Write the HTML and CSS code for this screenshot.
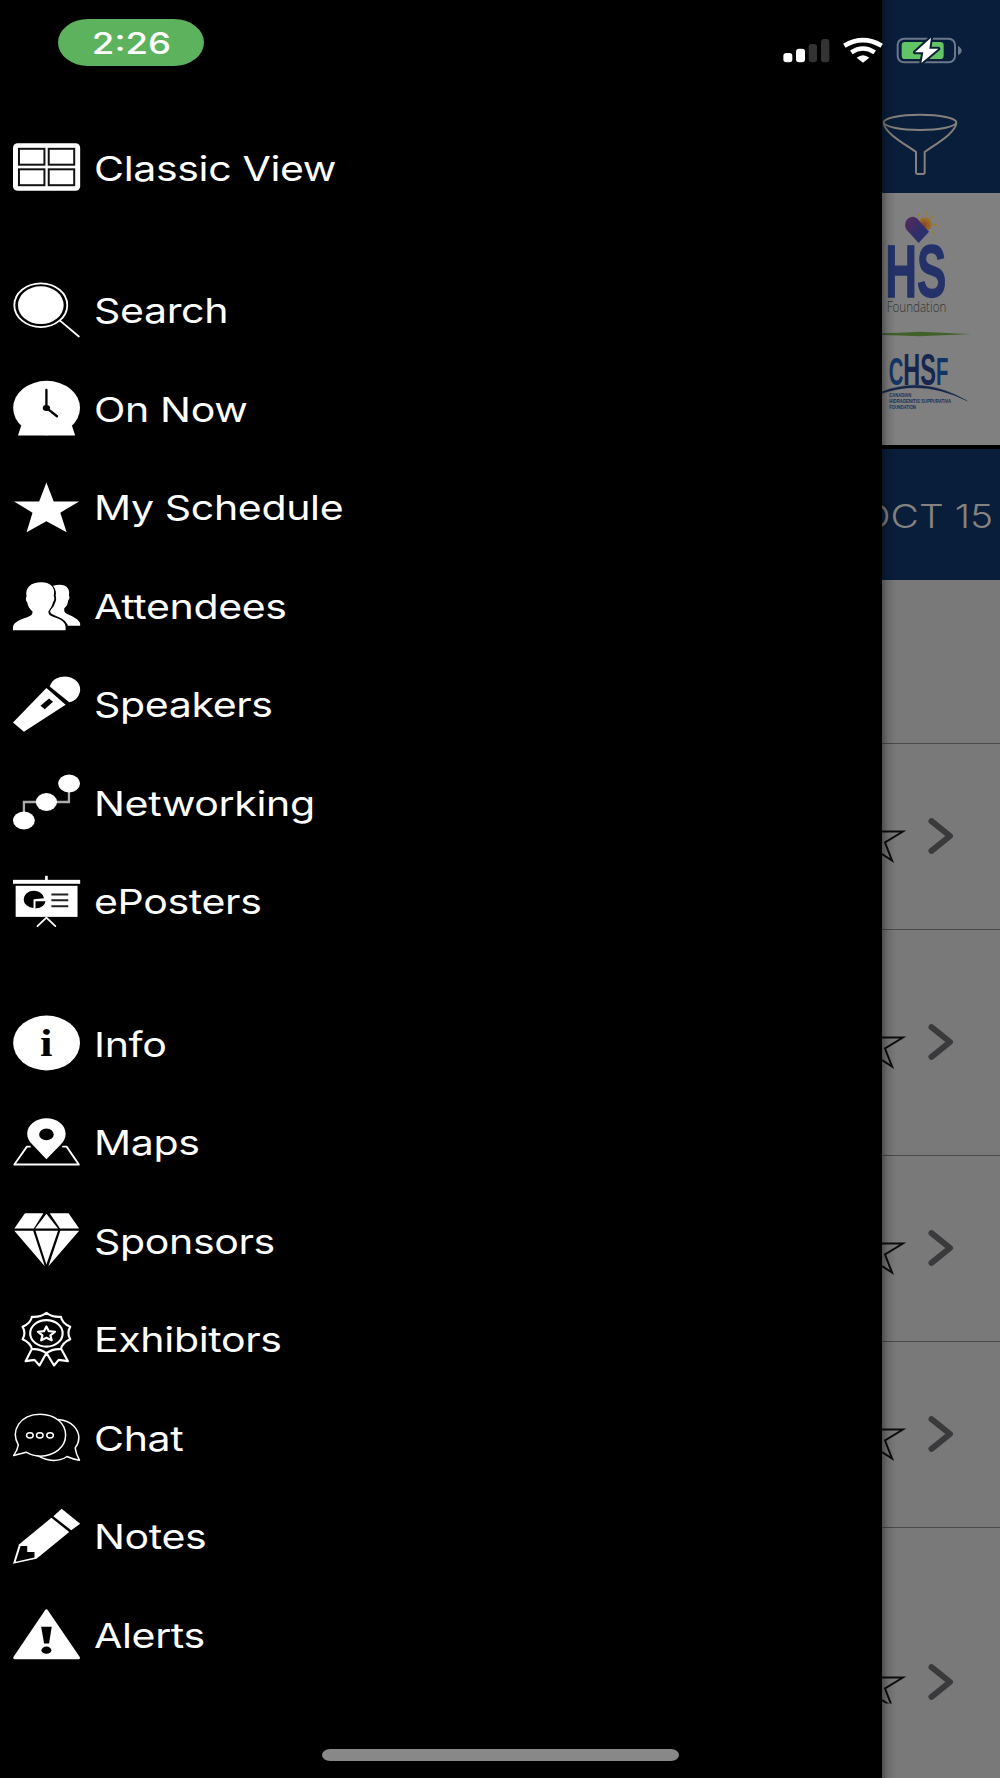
FILE: index.html
```html
<!DOCTYPE html>
<html lang="en">

<head>
    <meta charset="UTF-8">
    <meta name="viewport" content="width=device-width, initial-scale=1.0">
    <title>Menu</title>
    <link rel="stylesheet" href="styles.css">
</head>

<body>
    <nav class="drawer">
        <ul class="menu-group">
            <li class="menu-item">
                <svg class="menu-icon" viewBox="0 0 204 168">
                    <rect x="0" y="12" width="203" height="144" rx="14" />
                    <g stroke="#111" stroke-width="6">
                        <rect x="18" y="29" width="77" height="48" />
                        <rect x="108" y="29" width="77" height="48" />
                        <rect x="18" y="91" width="77" height="48" />
                        <rect x="108" y="91" width="77" height="48" />
                    </g>
                </svg>
                <span class="label">Classic View</span>
            </li>
        </ul>

        <ul class="menu-group">
            <li class="menu-item">
                <svg class="menu-icon" viewBox="0 0 204 168">
                    <ellipse class="line" cx="84" cy="69.5" rx="80" ry="66" />
                    <ellipse cx="84" cy="69.5" rx="69" ry="57" />
                    <path class="line" d="M143 117 L199 164" />
                </svg>
                <span class="label">Search</span>
            </li>
            <li class="menu-item">
                <svg class="menu-icon" viewBox="0 0 204 168">
                    <ellipse cx="101.500" cy="84" rx="101" ry="82" />
                    <path d="M25 137 L15 167 H188 L178 137Z" />
                    <path d="M101 29 V84 L133 109" fill="none" stroke="#000" stroke-width="7" stroke-linecap="round" />
                    <ellipse class="dark" cx="101" cy="84" rx="11" ry="9" />
                </svg>
                <span class="label">On Now</span>
            </li>
            <li class="menu-item">
                <svg class="menu-icon" viewBox="0 0 204 168">
                    <path d="M101 10 L123 67 H200 L143 101 L162 160 L101 127 L41 160 L59 101 L3 67 H79Z" />
                </svg>
                <span class="label">My Schedule</span>
            </li>
            <li class="menu-item">
                <svg class="menu-icon" viewBox="0 0 204 168">
                    <path d="M0 160 V150 C2 136 20 128 45 120 C57 116 59 112 59 104 C50 96 45 88 43 76 C38 70 38 62 41 58 C36 30 55 15 85 15 C115 15 129 32 123 56 C126 62 126 68 121 76 C118 88 112 96 107 104 C107 112 110 116 122 120 C150 128 158 138 159 150 V160Z" />
                    <path d="M166 147 H203 V140 C200 128 180 118 165 112 C153 107 155 100 155 94 C165 86 165 80 167 70 C172 64 171 58 169 55 C174 30 155 16 121 26 C130 38 131 48 129 56 C132 66 130 72 126 80 C122 92 112 98 112 104 C114 112 122 114 130 117 C150 124 162 134 166 147Z" />
                </svg>
                <span class="label">Attendees</span>
            </li>
            <li class="menu-item">
                <svg class="menu-icon" viewBox="0 0 204 168">
                    <path d="M111 31 C118 9 138 1 158 1 C185 3 204 20 203 42 C201 62 188 76 170 79Z" />
                    <path d="M101 36 L159 86 L33 168 L0 140Z" />
                    <path class="dark" d="M109 67 L121 77 L96 100 L83 89Z" />
                </svg>
                <span class="label">Speakers</span>
            </li>
            <li class="menu-item">
                <svg class="menu-icon" viewBox="0 0 204 168">
                    <path d="M33 140 V84 H169 V28" fill="none" stroke="#aaa" stroke-width="7" />
                    <ellipse cx="169.500" cy="28" rx="33" ry="27" />
                    <ellipse cx="101" cy="84" rx="32" ry="27" />
                    <ellipse cx="33" cy="140" rx="33" ry="27" />
                </svg>
                <span class="label">Networking</span>
            </li>
            <li class="menu-item">
                <svg class="menu-icon" viewBox="0 0 204 168">
                    <rect x="0" y="20" width="203" height="12" />
                    <rect x="97" y="8" width="8" height="14" />
                    <rect x="8" y="38" width="187" height="94" />
                    <path class="line" d="M74 160 L101 134 L128 160" />
                    <path class="dark" d="M94 76 A31 26 0 1 0 62 105 V79Z M68 85 H98 Q96 104 68 107Z" />
                    <path d="M116 64 H167 M116 82 H167 M116 100 H167" stroke="#222" stroke-width="6" />
                </svg>
                <span class="label">ePosters</span>
            </li>
        </ul>

        <ul class="menu-group">
            <li class="menu-item">
                <svg class="menu-icon" viewBox="0 0 204 168">
                    <ellipse cx="101.500" cy="84" rx="101" ry="83" />
                    <text class="info-i" x="82" y="123" textLength="38" lengthAdjust="spacingAndGlyphs">i</text>
                </svg>
                <span class="label">Info</span>
            </li>
            <li class="menu-item">
                <svg class="menu-icon" viewBox="0 0 204 168">
                    <path d="M101 136 L60 93 C48 82 43 72 43 59 C43 32 70 12 101 12 C133 12 159 32 159 59 C159 72 154 82 143 93Z" />
                    <ellipse class="dark" cx="101" cy="61" rx="22" ry="18" />
                    <path class="line" d="M51 98 H42 L4 152 H199 L162 98 H151" />
                </svg>
                <span class="label">Maps</span>
            </li>
            <li class="menu-item">
                <svg class="menu-icon" viewBox="0 0 204 168">
                    <path d="M36 3 H92 L63 49 H4Z M101 5 L136 49 H67Z M111 3 H168 L200 49 H142Z" />
                    <path d="M4 56 H61 L96 163Z M68 56 H136 L101 158Z M143 56 H200 L107 163Z" />
                </svg>
                <span class="label">Sponsors</span>
            </li>
            <li class="menu-item">
                <svg class="menu-icon" viewBox="0 0 204 168">
                    <g class="line thick">
                        <path d="M101 5 Q120 19 145 17 Q148 36 173 47 Q162 66 173 85 Q148 96 145 115 Q120 113 101 127 Q82 113 57 115 Q54 96 29 85 Q40 66 29 47 Q54 36 57 17 Q82 19 101 5Z" />
                        <ellipse cx="101" cy="67" rx="49" ry="40" />
                        <path d="M101 46 L108 60 L127 62 L113 73 L117 88 L101 80 L85 88 L89 73 L75 62 L94 60Z" />
                        <path d="M55 118 L38 151 L65 147 L80 164 L101 126 L124 164 L138 147 L166 151 L148 118" />
                    </g>
                </svg>
                <span class="label">Exhibitors</span>
            </li>
            <li class="menu-item">
                <svg class="menu-icon" viewBox="0 0 204 168">
                    <g class="line thin">
                        <path d="M16 108 C-8 66 20 15 82 15 C130 15 159 45 159 78 C159 115 125 142 82 142 C66 142 50 136 40 130 L2 140 Q14 124 16 108Z" />
                        <path d="M137 31 C178 34 199 62 199 87 C199 98 194 109 188 117 Q190 136 201 154 Q180 151 163 143 C140 160 105 158 77 142" />
                        <ellipse cx="51" cy="79" rx="10" ry="8" />
                        <ellipse cx="81" cy="79" rx="10" ry="8" />
                        <ellipse cx="112" cy="79" rx="10" ry="8" />
                    </g>
                </svg>
                <span class="label">Chat</span>
            </li>
            <li class="menu-item">
                <svg class="menu-icon" viewBox="0 0 204 168">
                    <path d="M147 2 L203 47 L176 67 L122 24Z" />
                    <path d="M116 29 L170 72 L71 153 L0 168 L18 110Z" />
                    <path class="dark" d="M23 114 H43 V132 H65 V149 L8 162Z" />
                </svg>
                <span class="label">Notes</span>
            </li>
            <li class="menu-item">
                <svg class="menu-icon" viewBox="0 0 204 168">
                    <path d="M101 14 L198 156 H5Z" stroke="#fff" stroke-width="9" stroke-linejoin="round" />
                    <path class="dark" d="M85 62 H117 L109 113 H94Z" />
                    <ellipse class="dark" cx="101" cy="133" rx="15" ry="11" />
                </svg>
                <span class="label">Alerts</span>
            </li>
        </ul>
    </nav>

    <main class="page">
        <header class="page-header">
            <svg class="funnel" viewBox="366 340 230 190">
                <ellipse cx="480" cy="368" rx="109" ry="23" />
                <path d="M371 370 C374 400 430 430 468 457 V518 Q468 523 473 523 H489 Q494 523 494 518 V457 C532 430 586 400 589 370" />
            </svg>
        </header>

        <div class="sponsor-banner">
            <svg class="sponsor-logos" viewBox="66 10 354 756">
                <defs>
                    <linearGradient id="heart" x1="0" y1="0" x2="1" y2="1">
                        <stop offset="0" stop-color="#572a58" />
                        <stop offset="0.6" stop-color="#2e2f6b" />
                        <stop offset="1" stop-color="#24356f" />
                    </linearGradient>
                    <radialGradient id="sun" cx="0.4" cy="0.6" r="0.6">
                        <stop offset="0" stop-color="#8f4020" />
                        <stop offset="1" stop-color="#9a7a32" />
                    </radialGradient>
                </defs>
                <circle cx="196" cy="103" r="21" fill="url(#sun)" />
                <path d="M178 80 L173 72 M198 77 V67 M215 84 L222 75 M221 106 H232 M215 124 L223 133" stroke="#9a7c2c" stroke-width="4" />
                <path d="M176 160 L141 122 C130 108 136 86 154 82 C164 80 172 86 177 93 L207 126Z" fill="url(#heart)" />
                <text class="hs" x="76" y="321" textLength="183" lengthAdjust="spacingAndGlyphs">HS</text>
                <text class="foundation" x="80" y="366" textLength="179" lengthAdjust="spacingAndGlyphs">Foundation</text>
                <path d="M66 431 Q120 430 178 426 Q240 429 332 433 Q240 437 178 440 Q120 437 66 436Z" fill="#41612b" />
                <text class="chsf" x="86" y="585" textLength="179" lengthAdjust="spacingAndGlyphs"><tspan class="chsf-small">C</tspan>HS<tspan class="chsf-small">F</tspan></text>
                <path d="M66 606 Q190 556 322 634 Q190 568 66 611Z" fill="#14274b" stroke="#14274b" />
                <text class="chsf-name" x="88" y="621" textLength="66" lengthAdjust="spacingAndGlyphs">CANADIAN</text>
                <text class="chsf-name" x="88" y="640" textLength="185" lengthAdjust="spacingAndGlyphs">HIDRADENITIS SUPPURATIVA</text>
                <text class="chsf-name" x="88" y="659" textLength="80" lengthAdjust="spacingAndGlyphs">FOUNDATION</text>
            </svg>
        </div>

        <div class="day-bar"><span class="day">OCT 15</span></div>
        <div class="time-header"></div>

        <div class="session">
            <svg class="star" viewBox="0 0 24 36"><path d="M0 3.500 H21 L3 14.500 L10 32.500 L0 26" /></svg>
            <svg class="chevron" viewBox="0 0 26 36"><path d="M3.500 3.200 L22 18 L3.500 32.800" /></svg>
        </div>
        <div class="session tall">
            <svg class="star" viewBox="0 0 24 36"><path d="M0 3.500 H21 L3 14.500 L10 32.500 L0 26" /></svg>
            <svg class="chevron" viewBox="0 0 26 36"><path d="M3.500 3.200 L22 18 L3.500 32.800" /></svg>
        </div>
        <div class="session">
            <svg class="star" viewBox="0 0 24 36"><path d="M0 3.500 H21 L3 14.500 L10 32.500 L0 26" /></svg>
            <svg class="chevron" viewBox="0 0 26 36"><path d="M3.500 3.200 L22 18 L3.500 32.800" /></svg>
        </div>
        <div class="session">
            <svg class="star" viewBox="0 0 24 36"><path d="M0 3.500 H21 L3 14.500 L10 32.500 L0 26" /></svg>
            <svg class="chevron" viewBox="0 0 26 36"><path d="M3.500 3.200 L22 18 L3.500 32.800" /></svg>
        </div>
        <div class="session last">
            <svg class="star cut" viewBox="0 0 24 36"><path d="M0 3.500 H21 L3 14.500 L10 32.500 L0 26" /></svg>
            <svg class="chevron" viewBox="0 0 26 36"><path d="M3.500 3.200 L22 18 L3.500 32.800" /></svg>
        </div>
    </main>

    <!-- status bar floats over both the drawer and the page -->
    <div class="status-bar">
        <span class="clock"><span class="clock-text">2:26</span></span>
        <svg class="status-icons" viewBox="66 105 548 90">
            <g fill="#fff">
                <rect x="70" y="159" width="27" height="28" rx="9" />
                <rect x="108" y="146" width="27" height="41" rx="9" />
                <rect x="146" y="132" width="25" height="55" rx="9" fill="#333" />
                <rect x="183" y="117" width="25" height="70" rx="9" fill="#333" />
                <path d="M309 188 L290 173 Q309 158 328 173Z" />
            </g>
            <g fill="none" stroke="#fff" stroke-width="14">
                <path d="M253 137 Q309 104 365 137" />
                <path d="M274 157 Q309 134 344 157" />
            </g>
            <rect x="413" y="116" width="172" height="71" rx="19" fill="none" stroke="#6b788a" stroke-width="6" />
            <path d="M594 138 Q605 144 605 152 Q605 160 594 165Z" fill="#6b788a" />
            <rect x="425" y="126" width="126" height="51" rx="10" fill="#63c466" />
            <path d="M513 113 L465 157 H490 L484 189 L535 146 H508Z" fill="#fff" stroke="#091e3b" stroke-width="12" stroke-linejoin="round" paint-order="stroke" />
        </svg>
    </div>
    <div class="home-indicator"></div>
</body>

</html>
```
FILE: styles.css
```css
* {
    box-sizing: border-box;
}

body {
    margin: 0;
    width: 1000px;
    height: 1778px;
    display: flex;
    position: relative;
    overflow: hidden;
    background: #000;
    font-family: Inter, "Liberation Sans", sans-serif;
}

svg {
    display: block;
    flex: none;
}

/* drawer */
.drawer {
    width: 882px;
    padding: 118.2px 0 0 13px;
    display: flex;
    flex-direction: column;
    gap: 43.8px;
    background: #000;
}

.menu-group {
    margin: 0;
    padding: 0;
    list-style: none;
}

.menu-item {
    height: 98.5px;
    display: flex;
    align-items: center;
    gap: 13px;
}

.menu-icon {
    width: 67.5px;
    height: 56px;
    fill: #fff;
}

.line {
    fill: none;
    stroke: #fff;
    stroke-width: 5.5;
    stroke-linejoin: round;
    stroke-linecap: round;
}

.thick {
    stroke-width: 6.5;
}

.thin {
    stroke-width: 4.5;
}

.dark {
    fill: #000;
}

.info-i {
    fill: #000;
    font-family: "Liberation Serif", serif;
    font-weight: bold;
    font-size: 112px;
}

.label {
    color: #fff;
    font-size: 34.5px;
    line-height: 42px;
    padding-top: 3px;
    letter-spacing: -0.3px;
    white-space: nowrap;
    transform: scaleX(1.19);
    transform-origin: left center;
}

/* page behind the drawer */
.page {
    width: 118px;
    height: 1778px;
    position: relative;
    overflow: hidden;
    background: #797979;
}

.page::after {
    content: "";
    position: absolute;
    inset: 0;
    width: 14px;
    background: linear-gradient(to right, rgba(0, 0, 0, 0.35), rgba(0, 0, 0, 0.12) 40%, transparent);
}

.page-header {
    height: 193px;
    padding-top: 113px;
    background: #091e3b;
}

.funnel {
    width: 76.7px;
    height: 63.3px;
    fill: none;
    stroke: #85807d;
    stroke-width: 6;
}

.sponsor-banner {
    height: 252px;
    background: #808080;
}

.sponsor-logos {
    width: 118px;
    height: 252px;
    font-family: "Liberation Sans", sans-serif;
}

.hs {
    font-size: 222px;
    font-weight: bold;
    fill: #25326a;
    stroke: #25326a;
    stroke-width: 4;
}

.foundation {
    font-family: "Open Sans", sans-serif;
    font-weight: 300;
    font-size: 46px;
    fill: #333;
}

.chsf {
    font-size: 132px;
    font-weight: bold;
    fill: #16264f;
}

.chsf-small {
    font-size: 114px;
    fill: #123565;
}

.chsf-name {
    font-size: 16px;
    font-weight: bold;
    fill: #14305c;
}

.day-bar {
    height: 135px;
    padding: 3px 7px 0 0;
    border-top: 4px solid #000;
    display: flex;
    align-items: center;
    justify-content: flex-end;
    background: #091e3b;
}

.day {
    color: #85827f;
    font-size: 32.5px;
    font-weight: 300;
    white-space: nowrap;
    transform: scaleX(1.2);
    transform-origin: right center;
}

.time-header {
    height: 162.5px;
}

.session {
    height: 186px;
    border-top: 1px solid #4a4a4a;
    display: flex;
    align-items: center;
    gap: 22px;
}

.tall {
    height: 226.4px;
}

.last {
    height: 310px;
}

.star {
    width: 24px;
    height: 36px;
    margin-top: 20px;
    fill: none;
    stroke: #0c0c0c;
    stroke-width: 2;
}

.cut {
    clip-path: inset(0 0 7px 0);
}

.chevron {
    width: 26px;
    height: 36px;
    fill: none;
    stroke: #3a3a3c;
    stroke-width: 6;
    stroke-linecap: round;
    stroke-linejoin: round;
}

/* status bar */
.status-bar {
    position: absolute;
    top: 0;
    left: 0;
    width: 1000px;
    padding: 19px 35px 0 58px;
    display: flex;
    justify-content: space-between;
}

.clock {
    width: 146px;
    height: 47px;
    border-radius: 30px / 23.5px;
    display: flex;
    align-items: center;
    justify-content: center;
    background: #5db35d;
}

.clock-text {
    color: #fff;
    font-size: 30px;
    font-weight: 500;
    transform: scaleX(1.22);
}

.status-icons {
    width: 182.7px;
    height: 30px;
    margin: 16px 0 0;
}

.home-indicator {
    position: absolute;
    left: 322px;
    top: 1749px;
    width: 357px;
    height: 12px;
    border-radius: 8px / 6px;
    background: #888;
}
```
